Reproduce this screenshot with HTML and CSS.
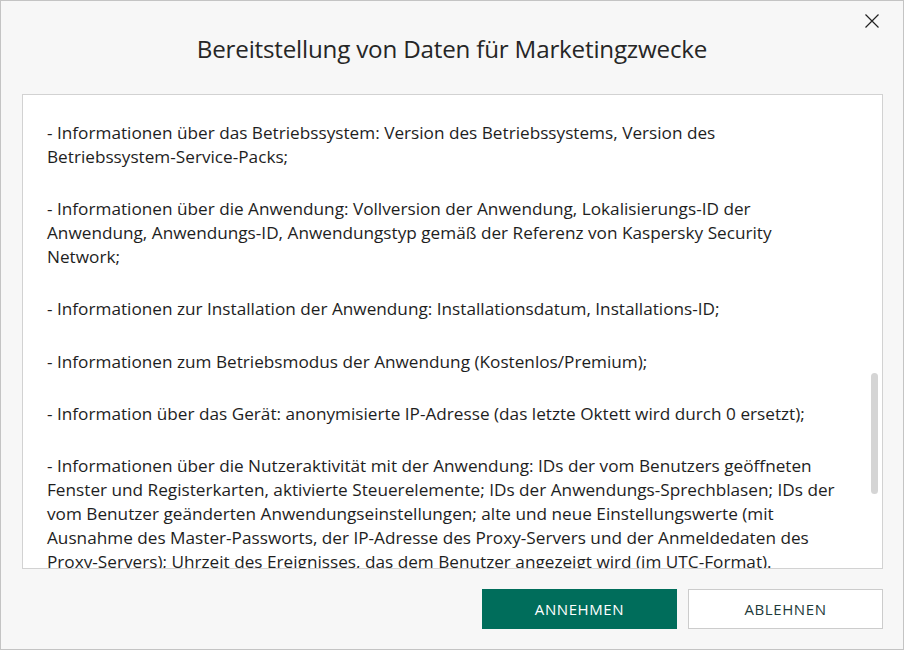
FILE: index.html
```html
<!DOCTYPE html>
<html lang="de">
<head>
<meta charset="utf-8">
<link rel="stylesheet" href="styles.css">
</head>
<body>
<div class="window">
  <div class="header">
    <h1 class="title">Bereitstellung von Daten für Marketingzwecke</h1>
    <button class="close" aria-label="Schließen">
      <svg width="16" height="16" viewBox="0 0 16 16"><path d="M1.5 1.5 L14.5 14.5 M14.5 1.5 L1.5 14.5" stroke="#222" stroke-width="1.2" fill="none"/></svg>
    </button>
  </div>
  <div class="content">
    <div class="text">
      <p>- Informationen über das Betriebssystem: Version des Betriebssystems, Version des<br>Betriebssystem-Service-Packs;</p>
      <p>- Informationen über die Anwendung: Vollversion der Anwendung, Lokalisierungs-ID der<br>Anwendung, Anwendungs-ID, Anwendungstyp gemäß der Referenz von Kaspersky Security<br>Network;</p>
      <p>- Informationen zur Installation der Anwendung: Installationsdatum, Installations-ID;</p>
      <p>- Informationen zum Betriebsmodus der Anwendung (Kostenlos/Premium);</p>
      <p>- Information über das Gerät: anonymisierte IP-Adresse (das letzte Oktett wird durch 0 ersetzt);</p>
      <p>- Informationen über die Nutzeraktivität mit der Anwendung: IDs der vom Benutzers geöffneten<br>Fenster und Registerkarten, aktivierte Steuerelemente; IDs der Anwendungs-Sprechblasen; IDs der<br>vom Benutzer geänderten Anwendungseinstellungen; alte und neue Einstellungswerte (mit<br>Ausnahme des Master-Passworts, der IP-Adresse des Proxy-Servers und der Anmeldedaten des<br>Proxy-Servers); Uhrzeit des Ereignisses, das dem Benutzer angezeigt wird (im UTC-Format).</p>
    </div>
    <div class="scrollbar"><div class="thumb"></div></div>
  </div>
  <div class="footer">
    <button class="btn btn-primary">ANNEHMEN</button>
    <button class="btn btn-secondary">ABLEHNEN</button>
  </div>
</div>
</body>
</html>
```
FILE: styles.css
```css
html, body {
  margin: 0;
  padding: 0;
  background: #f7f7f7;
}
.window {
  box-sizing: border-box;
  width: 904px;
  height: 650px;
  border: 1px solid #c4c4c4;
  background: #f7f7f7;
  display: flex;
  flex-direction: column;
  position: relative;
  font-family: "Open Sans", "Noto Sans", sans-serif;
  color: #222;
}
.header {
  height: 93px;
  display: flex;
  align-items: flex-start;
  justify-content: center;
}
.title {
  margin: 33px 0 0 0;
  font-weight: 400;
  font-size: 24.2px;
  line-height: 30px;
  color: #262626;
  letter-spacing: -0.2px;
}
.close {
  position: absolute;
  top: 11px;
  right: 22px;
  width: 18px;
  height: 18px;
  padding: 0;
  border: 0;
  background: transparent;
  display: flex;
  align-items: center;
  justify-content: center;
}
.content {
  margin: 0 20px 0 21px;
  height: 475px;
  box-sizing: border-box;
  border: 1px solid #d2d2d2;
  background: #fff;
  overflow: hidden;
  position: relative;
}
.text {
  padding: 26px 20px 0 24px;
  font-size: 17.2px;
  line-height: 24.1px;
  color: #1e1e1e;
  white-space: nowrap;
}
.text p {
  margin: 0 0 28px 0;
}
.scrollbar {
  position: absolute;
  top: 0;
  right: 4px;
  width: 8px;
  height: 100%;
}
.thumb {
  position: absolute;
  top: 278px;
  left: 1px;
  width: 7px;
  height: 121px;
  border-radius: 4px;
  background: #d5d5d5;
}
.footer {
  display: flex;
  justify-content: flex-end;
  gap: 11px;
  padding: 20px 20px 0 0;
}
.btn {
  width: 195px;
  height: 40px;
  box-sizing: border-box;
  font-family: "Open Sans", "Noto Sans", sans-serif;
  font-size: 15px;
  letter-spacing: 0.6px;
  cursor: pointer;
}
.btn-primary {
  background: #006d5b;
  color: #fff;
  border: 0;
}
.btn-secondary {
  background: #fff;
  color: #1f3b3b;
  border: 1px solid #cccccc;
}
```
